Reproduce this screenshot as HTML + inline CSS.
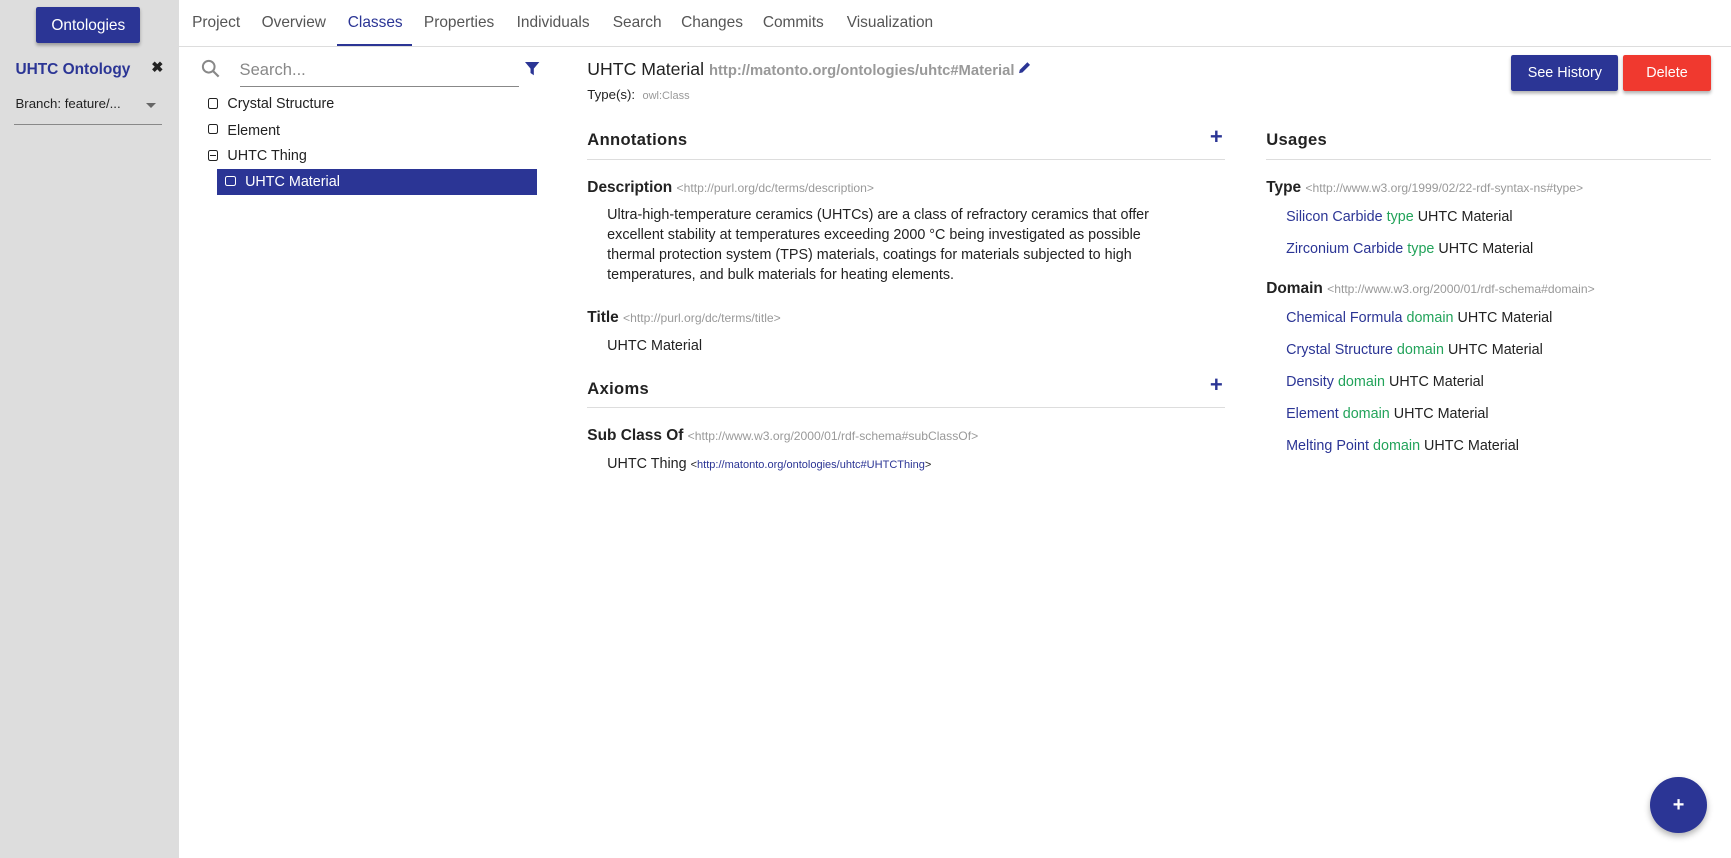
<!DOCTYPE html>
<html><head><meta charset="utf-8"><style>
html,body{margin:0;padding:0;}
body{width:1568px;height:777px;zoom:1.10395;overflow:hidden;position:relative;font-family:"Liberation Sans",sans-serif;color:#222;background:#fff;}
.a{position:absolute;white-space:nowrap;}
.side{left:0;top:0;width:162px;height:777px;background:#ddd;}
.btn{background:#2b3595;color:#fff;font-size:14px;text-align:center;border-radius:2px;box-shadow:0 2px 3px rgba(0,0,0,.3);}
.tab{top:13px;font-size:14px;color:#555;}
.blue{color:#2b3595;}
.gray{color:#999;}
.green{color:#22a35a;}
.hd{font-size:15px;font-weight:bold;letter-spacing:.3px;color:#222;}
.lbl{font-size:14px;font-weight:bold;color:#222;}
.small{font-size:11px;color:#999;font-weight:normal;}
.t13{font-size:13px;}
.cb{width:8px;height:8px;border:1.3px solid #222;border-radius:2px;}
.line{height:1px;background:#ddd;}
</style></head><body>
<div class="a side"></div>
<div class="a btn" style="left:33px;top:6px;width:94px;height:33px;line-height:35px;">Ontologies</div>
<div class="a blue" style="left:14px;top:55px;font-size:14px;font-weight:bold;">UHTC Ontology</div>
<div class="a" style="left:137px;top:54px;font-size:13px;font-weight:bold;">✖</div>
<div class="a" style="left:14px;top:87px;font-size:12px;">Branch: feature/...</div>
<div class="a" style="left:132px;top:93px;width:0;height:0;border-left:5px solid transparent;border-right:5px solid transparent;border-top:5px solid #666;"></div>
<div class="a" style="left:13px;top:112px;width:134px;height:1px;background:#888;"></div>

<div class="a tab" style="left:174px;">Project</div>
<div class="a tab" style="left:237px;">Overview</div>
<div class="a tab blue" style="left:315px;">Classes</div>
<div class="a tab" style="left:384px;">Properties</div>
<div class="a tab" style="left:468px;">Individuals</div>
<div class="a tab" style="left:555px;">Search</div>
<div class="a tab" style="left:617px;">Changes</div>
<div class="a tab" style="left:691px;">Commits</div>
<div class="a tab" style="left:767px;">Visualization</div>
<div class="a" style="left:162px;top:42px;width:1406px;height:1px;background:#ddd;"></div>
<div class="a" style="left:305px;top:40px;width:68px;height:2px;background:#2b3595;"></div>

<svg class="a" style="left:182px;top:53px" width="18" height="18" viewBox="0 0 18 18"><circle cx="7" cy="7" r="5.3" fill="none" stroke="#888" stroke-width="1.8"/><path d="M11 11l5 5" stroke="#888" stroke-width="2"/></svg>
<div class="a" style="left:217px;top:54px;font-size:15px;color:#888;">Search...</div>
<div class="a" style="left:217px;top:78px;width:253px;height:1px;background:#888;"></div>
<svg class="a" style="left:476px;top:56px" width="13" height="13" viewBox="0 0 13 13"><path d="M0 0h13L8 6v6L5 10V6z" fill="#2b3595"/></svg>

<div class="a cb" style="left:188px;top:89px;"></div><div class="a t13" style="left:206px;top:87px;">Crystal Structure</div>
<div class="a cb" style="left:188px;top:112px;"></div><div class="a t13" style="left:206px;top:111px;">Element</div>
<div class="a cb" style="left:188px;top:136px;"><div style="position:absolute;left:1px;top:3.5px;width:6px;height:1.2px;background:#222"></div></div><div class="a t13" style="left:206px;top:134px;">UHTC Thing</div>
<div class="a" style="left:197px;top:153px;width:289px;height:24px;background:#2b3595;"></div>
<div class="a cb" style="left:204px;top:159px;border-color:#fff;"></div><div class="a t13" style="left:222px;top:158px;color:#fff;">UHTC Material</div>

<div class="a" style="left:532px;top:53px;font-size:16px;">UHTC Material <span style="font-size:13.4px;font-weight:bold;color:#999;">http://matonto.org/ontologies/uhtc#Material</span><svg style="margin-left:3px" width="12" height="12" viewBox="0 0 12 12"><path d="M1 11l.6-3L8.5 1.1l2.4 2.4L4 10.4z" fill="#2b3595"/></svg></div>
<div class="a" style="left:532px;top:79px;font-size:12px;">Type(s): &nbsp;<span class="small" style="font-size:10px;">owl:Class</span></div>
<div class="a btn" style="left:1369px;top:50px;width:97px;height:32px;line-height:34px;font-size:13px;">See History</div>
<div class="a btn" style="left:1470px;top:50px;width:80px;height:32px;line-height:34px;font-size:13px;background:#f0392f;">Delete</div>

<div class="a hd" style="left:532px;top:118px;">Annotations</div>
<div class="a blue" style="left:1096px;top:112px;font-size:20px;font-weight:bold;">+</div>
<div class="a line" style="left:532px;top:144px;width:578px;"></div>
<div class="a lbl" style="left:532px;top:162px;">Description <span class="small">&lt;http://purl.org/dc/terms/description&gt;</span></div>
<div class="a t13" style="left:550px;top:187px;line-height:18px;white-space:normal;width:515px;">Ultra-high-temperature ceramics (UHTCs) are a class of refractory ceramics that offer excellent stability at temperatures exceeding 2000 °C being investigated as possible thermal protection system (TPS) materials, coatings for materials subjected to high temperatures, and bulk materials for heating elements.</div>
<div class="a lbl" style="left:532px;top:280px;">Title <span class="small">&lt;http://purl.org/dc/terms/title&gt;</span></div>
<div class="a t13" style="left:550px;top:306px;">UHTC Material</div>
<div class="a hd" style="left:532px;top:343px;">Axioms</div>
<div class="a blue" style="left:1096px;top:337px;font-size:20px;font-weight:bold;">+</div>
<div class="a line" style="left:532px;top:369px;width:578px;"></div>
<div class="a lbl" style="left:532px;top:387px;">Sub Class Of <span class="small">&lt;http://www.w3.org/2000/01/rdf-schema#subClassOf&gt;</span></div>
<div class="a t13" style="left:550px;top:413px;">UHTC Thing <span style="font-size:10px;">&lt;<span class="blue">http://matonto.org/ontologies/uhtc#UHTCThing</span>&gt;</span></div>

<div class="a hd" style="left:1147px;top:118px;">Usages</div>
<div class="a line" style="left:1147px;top:144px;width:403px;"></div>
<div class="a lbl" style="left:1147px;top:162px;">Type <span class="small">&lt;http://www.w3.org/1999/02/22-rdf-syntax-ns#type&gt;</span></div>
<div class="a t13" style="left:1165px;top:189px;"><span class="blue">Silicon Carbide</span> <span class="green">type</span> UHTC Material</div>
<div class="a t13" style="left:1165px;top:218px;"><span class="blue">Zirconium Carbide</span> <span class="green">type</span> UHTC Material</div>
<div class="a lbl" style="left:1147px;top:254px;">Domain <span class="small">&lt;http://www.w3.org/2000/01/rdf-schema#domain&gt;</span></div>
<div class="a t13" style="left:1165px;top:281px;"><span class="blue">Chemical Formula</span> <span class="green">domain</span> UHTC Material</div>
<div class="a t13" style="left:1165px;top:310px;"><span class="blue">Crystal Structure</span> <span class="green">domain</span> UHTC Material</div>
<div class="a t13" style="left:1165px;top:339px;"><span class="blue">Density</span> <span class="green">domain</span> UHTC Material</div>
<div class="a t13" style="left:1165px;top:368px;"><span class="blue">Element</span> <span class="green">domain</span> UHTC Material</div>
<div class="a t13" style="left:1165px;top:397px;"><span class="blue">Melting Point</span> <span class="green">domain</span> UHTC Material</div>

<div class="a" style="left:1495px;top:704px;width:51px;height:51px;border-radius:50%;background:#2b3595;box-shadow:0 3px 6px rgba(0,0,0,.3);color:#fff;text-align:center;line-height:51px;font-size:18px;font-weight:bold;">+</div>
</body></html>
